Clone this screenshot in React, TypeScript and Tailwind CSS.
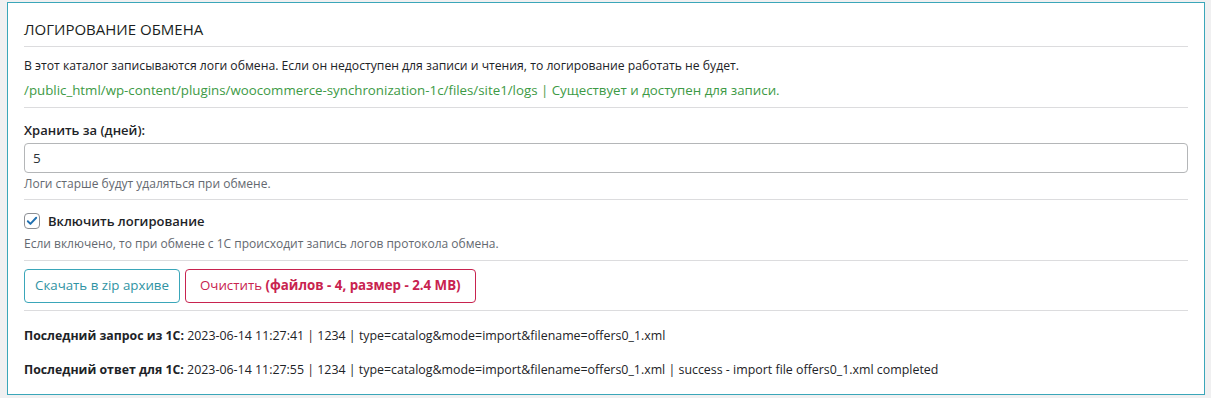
export default function App() {
    const font = { fontFamily: '"Open Sans", "Noto Sans", sans-serif' };

    return (
        <div className="min-h-[398px] bg-[#f0f0f1] pl-[7px] pt-[2px] pr-[6px] pb-[4px]" style={font}>
            <div className="border border-[#3aa6b9] bg-white px-4 text-[13px] text-[#1d2327]">

                {/* Заголовок */}
                <h2 className="pt-[16px] pb-[7px] text-[15px] leading-[20px] font-medium uppercase text-[#1a1e21]">
                    Логирование обмена
                </h2>
                <div className="h-px bg-[#dcdcde]" />

                {/* Каталог логов */}
                <div className="pt-[7px] pb-[5px] leading-[24px]">
                    <p className="text-[12.2px]">
                        В этот каталог записываются логи обмена. Если он недоступен для записи и чтения, то логирование работать не будет.
                    </p>
                    <p className="text-[13.3px] text-[#3d9a45]">
                        /public_html/wp-content/plugins/woocommerce-synchronization-1c/files/site1/logs | Существует и доступен для записи.
                    </p>
                </div>
                <div className="h-px bg-[#dcdcde]" />

                {/* Срок хранения */}
                <div className="pt-[12px] pb-[6px]">
                    <label className="block text-[13px] leading-[20px] font-semibold">Хранить за (дней):</label>
                    <input
                        type="text"
                        defaultValue="5"
                        className="mt-[3px] block h-[30px] w-full rounded-[4px] border border-[#b4b6b8] px-[8px] text-[13.5px] text-[#2c3338] outline-none"
                    />
                    <p className="mt-[2px] text-[12px] leading-[18px] text-[#646970]">Логи старше будут удаляться при обмене.</p>
                </div>
                <div className="h-px bg-[#dcdcde]" />

                {/* Включить логирование */}
                <div className="pt-[13px] pb-[6px]">
                    <label className="flex items-center gap-[8px]">
                        <span className="flex h-[16px] w-[16px] items-center justify-center rounded-[4px] border border-[#8c8f94] bg-white">
                            <svg viewBox="0 0 16 16" className="h-[14px] w-[14px]" fill="none">
                                <path d="M3.2 8.3l3 3 6.6-7" stroke="#2271b1" strokeWidth="2.2" strokeLinecap="round" strokeLinejoin="round" />
                            </svg>
                        </span>
                        <span className="text-[13px] leading-[16px] font-semibold">Включить логирование</span>
                    </label>
                    <p className="mt-[5px] text-[12px] leading-[20px] text-[#646970]">
                        Если включено, то при обмене с 1С происходит запись логов протокола обмена.
                    </p>
                </div>
                <div className="h-px bg-[#dcdcde]" />

                {/* Кнопки */}
                <div className="flex gap-[5px] pt-[8px] pb-[7px]">
                    <button className="h-[34px] rounded-[4px] border border-[#3aa6b9] px-[10px] text-[13.3px] text-[#2f93a3]">
                        Скачать в zip архиве
                    </button>
                    <button className="h-[34px] rounded-[4px] border border-[#c8234f] px-[14px] text-[13.3px] text-[#c8234f]">
                        Очистить <span className="font-bold">(файлов - 4, размер - 2.4 MB)</span>
                    </button>
                </div>
                <div className="h-px bg-[#dcdcde]" />

                {/* Последние запросы */}
                <div className="pt-[15px] pb-[14px] text-[12.4px] leading-[20px]">
                    <p>
                        <span className="text-[12.3px] font-bold">Последний запрос из 1С:</span> 2023-06-14 11:27:41 | 1234 | type=catalog&amp;mode=import&amp;filename=offers0_1.xml
                    </p>
                    <p className="mt-[14px]">
                        <span className="text-[12.3px] font-bold">Последний ответ для 1С:</span> 2023-06-14 11:27:55 | 1234 | type=catalog&amp;mode=import&amp;filename=offers0_1.xml | success - import file offers0_1.xml completed
                    </p>
                </div>

            </div>
        </div>
    );
}
